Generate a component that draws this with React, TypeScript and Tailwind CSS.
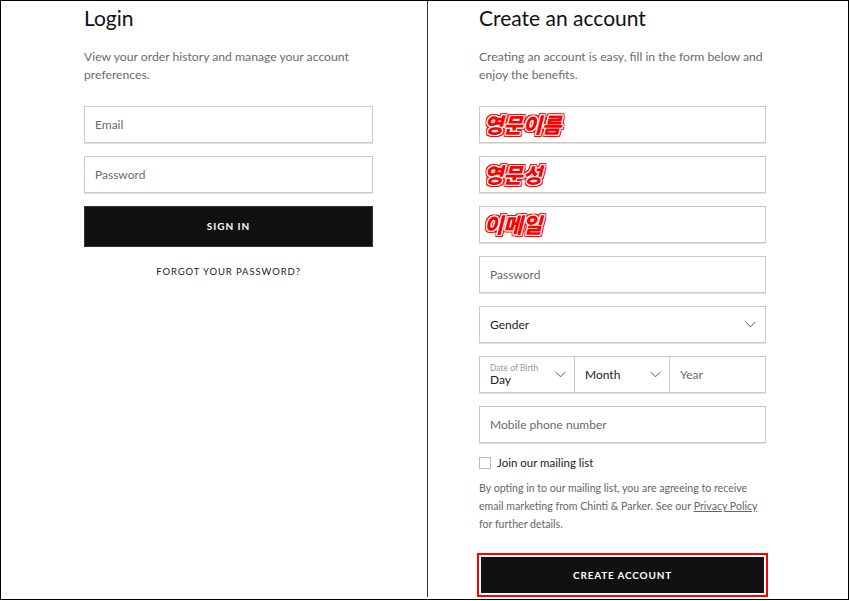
import React from "react";

const Chevron = () => (
  <svg width="11" height="7" viewBox="0 0 11 7" fill="none" className="shrink-0">
    <path d="M0.5 0.8 L5.5 5.8 L10.5 0.8" stroke="#555" strokeWidth="1" />
  </svg>
);

const Field = ({ children, className = "" }: { children?: React.ReactNode; className?: string }) => (
  <div
    className={`h-[37px] border border-[#cacaca] shadow-[0_1px_0_#e2e2e2] flex items-center ${className}`}
  >
    {children}
  </div>
);

const KoField = ({ text }: { text: string }) => (
  <Field className="pl-[4px]">
    <span
      className="inline-block text-[21px] font-extrabold italic text-[#ff0000] leading-none [font-family:'Noto_Sans_CJK_KR',sans-serif] [text-shadow:1px_0_0_#fff,-1px_0_0_#fff,0_1px_0_#fff,0_-1px_0_#fff,1px_1px_0_#fff,-1px_-1px_0_#fff,1px_-1px_0_#fff,-1px_1px_0_#fff,2px_0_0_#f00,-2px_0_0_#f00,0_2px_0_#f00,0_-2px_0_#f00,2px_2px_0_#f00,-2px_-2px_0_#f00,2px_-2px_0_#f00,-2px_2px_0_#f00]"
    >
      {text}
    </span>
  </Field>
);

export default function App() {
  return (
    <div className="w-[850px] h-[601px] bg-white [font-family:Lato,'Noto_Sans',sans-serif]">
      <div className="w-[849px] h-[600px] border border-black flex overflow-hidden">
        {/* Left column */}
        <div className="w-[426px] shrink-0 pl-[83px] pt-[5px]">
          <div className="w-[289px]">
            <h1 className="text-[21px] leading-[24px] text-[#111]">Login</h1>
            <p className="mt-[18px] text-[12.2px] leading-[18px] text-[#6b6b6b]">
              View your order history and manage your account preferences.
            </p>
            <div className="mt-[22px] flex flex-col gap-[13px]">
              <Field className="px-[10px]">
                <span className="text-[12px] text-[#6a6a6a]">Email</span>
              </Field>
              <Field className="px-[10px]">
                <span className="text-[12px] text-[#6a6a6a]">Password</span>
              </Field>
              <div className="h-[41px] bg-[#111] border border-[#333] flex items-center justify-center">
                <span className="text-[10px] font-bold tracking-[1px] text-white">SIGN IN</span>
              </div>
            </div>
            <div className="mt-[17px] text-center text-[9.5px] leading-[16px] tracking-[0.9px] text-[#222]">
              FORGOT YOUR PASSWORD?
            </div>
          </div>
        </div>
        {/* Divider */}
        <div className="w-px h-[596px] bg-[#333] shrink-0" />
        {/* Right column */}
        <div className="flex-1 pl-[51px] pt-[5px]">
          <div className="w-[287px]">
            <h1 className="text-[21px] leading-[24px] text-[#111]">Create an account</h1>
            <p className="mt-[18px] text-[12.2px] leading-[18px] text-[#6b6b6b]">
              Creating an account is easy, fill in the form below and enjoy the benefits.
            </p>
            <div className="mt-[22px] flex flex-col gap-[13px]">
              <KoField text="영문이름" />
              <KoField text="영문성" />
              <KoField text="이메일" />
              <Field className="px-[10px]">
                <span className="text-[12px] text-[#6a6a6a]">Password</span>
              </Field>
              <Field className="justify-between pl-[10px] pr-[9px]">
                <span className="text-[12px] text-[#222]">Gender</span>
                <Chevron />
              </Field>
              <div className="h-[37px] flex shadow-[0_1px_0_#e2e2e2]">
                <div className="w-[96px] border border-[#cacaca] flex items-center justify-between pl-[10px] pr-[8px]">
                  <div className="flex flex-col">
                    <span className="text-[8.5px] leading-[10px] text-[#999]">Date of Birth</span>
                    <span className="text-[12px] leading-[14px] text-[#222]">Day</span>
                  </div>
                  <Chevron />
                </div>
                <div className="w-[95px] border border-l-0 border-[#cacaca] flex items-center justify-between pl-[10px] pr-[8px]">
                  <span className="text-[12px] text-[#222]">Month</span>
                  <Chevron />
                </div>
                <div className="flex-1 border border-l-0 border-[#cacaca] flex items-center pl-[10px]">
                  <span className="text-[12px] text-[#6a6a6a]">Year</span>
                </div>
              </div>
              <Field className="px-[10px]">
                <span className="text-[12px] text-[#6a6a6a]">Mobile phone number</span>
              </Field>
            </div>
            <div className="mt-[11px] flex items-center h-[18px]">
              <div className="w-[12px] h-[12px] border border-[#bbb]" />
              <span className="ml-[6px] text-[11.5px] text-[#222]">Join our mailing list</span>
            </div>
            <p className="mt-[7px] text-[10.6px] leading-[18px] text-[#666]">
              By opting in to our mailing list, you are agreeing to receive email marketing from
              Chinti &amp; Parker. See our <span className="underline">Privacy Policy</span> for
              further details.
            </p>
            <div className="mt-[20px] -mx-[2px] border-2 border-[#ff0000] p-[2px]">
              <div className="h-[36px] bg-[#111] flex items-center justify-center">
                <span className="text-[10px] font-bold tracking-[0.8px] text-white">CREATE ACCOUNT</span>
              </div>
            </div>
          </div>
        </div>
      </div>
    </div>
  );
}
